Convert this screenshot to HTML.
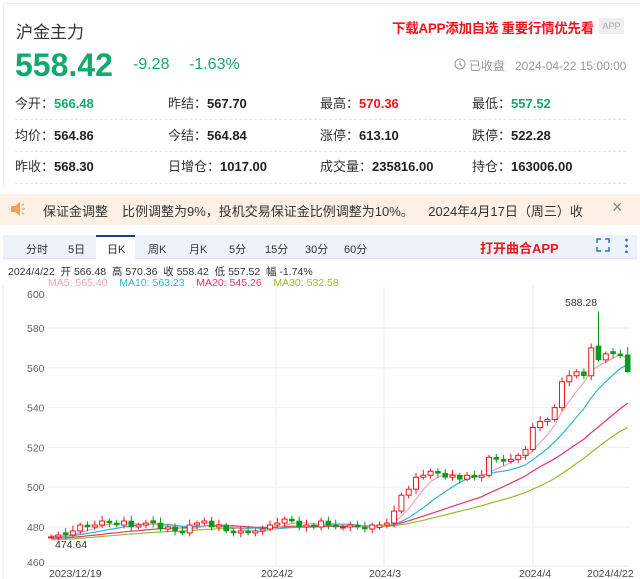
<!DOCTYPE html>
<html><head><meta charset="utf-8"><style>
*{margin:0;padding:0;box-sizing:border-box}
body{width:640px;height:579px;background:#fff;font-family:"Liberation Sans","Noto Sans CJK SC",sans-serif;position:relative;overflow:hidden;color:#333}
.a{position:absolute;white-space:nowrap}
.lbl{font-size:13px;color:#333;line-height:16px}
.lbl b{font-weight:bold;color:#222;font-size:13px}
.sep{position:absolute;left:15px;width:611px;border-top:1px dashed #e3e3e3}
.tab{position:absolute;top:241px;font-size:11px;color:#333}
</style></head><body>
<div class="a" style="left:3px;top:3px;width:637px;height:1px;background:#eee"></div>
<div class="a" style="left:3px;top:3px;width:1px;height:185px;background:#eee"></div>
<div class="a" style="left:16px;top:18px;font-size:17px;color:#333">沪金主力</div>
<div class="a" style="left:392px;top:17px;font-size:13.5px;font-weight:bold;color:#f0141e;letter-spacing:-0.3px">下载APP添加自选 重要行情优先看</div>
<div class="a" style="left:599px;top:18px;width:25px;height:16px;background:#eee;color:#aaa;font-size:9px;text-align:center;line-height:16px">APP</div>
<div class="a" style="left:15px;top:47px;font-size:32px;font-weight:bold;color:#15a86c;line-height:36px">558.42</div>
<div class="a" style="left:133px;top:56px;font-size:16px;color:#15a86c">-9.28</div>
<div class="a" style="left:189px;top:56px;font-size:16px;color:#15a86c">-1.63%</div>
<svg class="a" style="left:454px;top:58px" width="12" height="12"><circle cx="6" cy="6" r="5" fill="none" stroke="#999" stroke-width="1.1"/><path d="M6 3v3.3l2 1.5" fill="none" stroke="#999" stroke-width="1.1"/></svg>
<div class="a" style="left:469px;top:57px;font-size:12px;color:#999">已收盘&nbsp;&nbsp; 2024-04-22 15:00:00</div>
<div class="a lbl" style="left:15px;top:96px">今开：<b style="color:#15a86c">566.48</b></div>
<div class="a lbl" style="left:168px;top:96px">昨结：<b>567.70</b></div>
<div class="a lbl" style="left:320px;top:96px">最高：<b style="color:#f0141e">570.36</b></div>
<div class="a lbl" style="left:472px;top:96px">最低：<b style="color:#15a86c">557.52</b></div>
<div class="sep" style="top:119px"></div>
<div class="a lbl" style="left:15px;top:128px">均价：<b>564.86</b></div>
<div class="a lbl" style="left:168px;top:128px">今结：<b>564.84</b></div>
<div class="a lbl" style="left:320px;top:128px">涨停：<b>613.10</b></div>
<div class="a lbl" style="left:472px;top:128px">跌停：<b>522.28</b></div>
<div class="sep" style="top:151px"></div>
<div class="a lbl" style="left:15px;top:159px">昨收：<b>568.30</b></div>
<div class="a lbl" style="left:168px;top:159px">日增仓：<b>1017.00</b></div>
<div class="a lbl" style="left:320px;top:159px">成交量：<b>235816.00</b></div>
<div class="a lbl" style="left:472px;top:159px">持仓：<b>163006.00</b></div>
<div class="sep" style="top:183px"></div>
<div class="a" style="left:0;top:194px;width:640px;height:31px;background:#fdf0e6"></div>
<svg class="a" style="left:10px;top:201px" width="16" height="16"><path d="M1 5h4l5-4v14l-5-4H1z" fill="#f0a060"/><path d="M12 8h3M12 4l2-1M12 12l2 1" stroke="#f0a060" stroke-width="1.3"/></svg>
<div class="a" style="left:43px;top:201px;font-size:13px;color:#333">保证金调整</div>
<div class="a" style="left:122px;top:201px;font-size:13px;color:#333">比例调整为9%，投机交易保证金比例调整为10%。&nbsp;&nbsp;&nbsp; 2024年4月17日（周三）收</div>
<div class="a" style="left:612px;top:197px;font-size:18px;color:#888">×</div>
<div class="a" style="left:3px;top:235px;width:634px;height:24px;background:#eef3fb;border-bottom:1px solid #dde5f0"></div>
<div class="a" style="left:96px;top:235px;width:39px;height:25px;background:#fff;border-top:2px solid #1b3d8f"></div>
<div class="tab" style="left:26px">分时</div>
<div class="tab" style="left:68px">5日</div>
<div class="tab" style="left:107px">日K</div>
<div class="tab" style="left:148px">周K</div>
<div class="tab" style="left:189px">月K</div>
<div class="tab" style="left:229px">5分</div>
<div class="tab" style="left:265px">15分</div>
<div class="tab" style="left:305px">30分</div>
<div class="tab" style="left:344px">60分</div>
<div class="a" style="left:480px;top:238px;font-size:13px;font-weight:bold;color:#f0141e">打开曲合APP</div>
<svg class="a" style="left:596px;top:238px" width="14" height="14"><path d="M1 5V1h4M9 1h4v4M13 9v4H9M5 13H1V9" fill="none" stroke="#2b6fd6" stroke-width="1.5"/></svg>
<div class="a" style="left:625px;top:237px;width:3px;height:16px;background:radial-gradient(circle,#2b6fd6 1.3px,transparent 1.5px) 0 0/3px 6px"></div>
<div class="a" style="left:8px;top:264px;font-size:10.5px;color:#333">2024/4/22&nbsp; 开 566.48&nbsp; 高 570.36&nbsp; 收 558.42&nbsp; 低 557.52&nbsp; 幅 -1.74%</div>
<div class="a" style="left:48px;top:277px;font-size:10.5px"><span style="color:#f7a1b8">MA5: 565.40</span>&nbsp;&nbsp;&nbsp; <span style="color:#2cb7d8">MA10: 563.23</span>&nbsp;&nbsp;&nbsp; <span style="color:#e8336d">MA20: 545.26</span>&nbsp;&nbsp;&nbsp; <span style="color:#9bbb2b">MA30: 532.58</span></div>
<svg id="ch" class="a" style="left:0;top:286px" width="640" height="293"></svg>
<script>
var c=[475,476,476,478,481,480,481,483,482,
481,483,480,481,482,482,479,480,478,477,481,482,483,480,481,478,477,478,477,478,479,481,
482,484,483,480,481,480,483,481,480,480,481,480,479,481,481,
482,488,496,499,505,506,508,507,505,506,504,506,505,506,515,514,513,514,516,519,530,
533,534,540,553,556,558,556,570,564,567,567,566,558];
var pre=[];for(var i=0;i<30;i++)pre.push(470+i*0.15+((i*7)%5)*0.6);
var all=pre.concat(c);
function Y(p){return 42+(580-p)*1.99}
function X(i){return 51+i*7.3}
var s='';
[580,560,540,520,500,480].forEach(function(v){var y=Y(v);s+='<line x1="48" x2="630" y1="'+y+'" y2="'+y+'" stroke="#eee"/>';});
[[600,8],[580,Y(580)],[560,Y(560)],[540,Y(540)],[520,Y(520)],[500,Y(500)],[480,Y(480)],[460,276]].forEach(function(a){s+='<text x="27" y="'+(a[1]+4)+'" font-size="10.5" fill="#666" font-family="Liberation Sans">'+a[0]+'</text>';});
s+='<line x1="48" x2="630" y1="280" y2="280" stroke="#eee"/>';
[276,384,533].forEach(function(x){s+='<line x1="'+x+'" x2="'+x+'" y1="0" y2="281" stroke="#eee"/>';});
s+='<line x1="3" x2="3" y1="0" y2="293" stroke="#eee"/>';
var lab=[[49,'2023/12/19'],[261,'2024/2'],[369,'2024/3'],[519,'2024/4'],[587,'2024/4/22']];
lab.forEach(function(l){s+='<text x="'+l[0]+'" y="291" font-size="10.5" fill="#444" font-family="Liberation Sans">'+l[1]+'</text>';});
function ma(n,col){var pts=[];for(var i=0;i<c.length;i++){var k=i+30,sum=0;for(var j=0;j<n;j++)sum+=all[k-j];pts.push(X(i).toFixed(1)+','+Y(sum/n).toFixed(1));}s+='<polyline points="'+pts.join(' ')+'" fill="none" stroke="'+col+'" stroke-width="1.2"/>';}
ma(30,'#9bbb2b');ma(20,'#e8336d');ma(10,'#2cb7d8');ma(5,'#f7a1b8');
for(var i=0;i<c.length;i++){
 var o=i==0?474.5:all[i+29];
 if(Math.abs(o-c[i])<0.3)o=c[i]+((i%3)-1)*1.2;
 var h=Math.max(o,c[i])+1.2+(i%4)*0.5,l=Math.min(o,c[i])-1.2-(i%3)*0.5;
 if(i==75){o=571;h=588.28;l=563;}
 if(i==79){o=566.5;h=570.36;l=557.52;}
 if(i==0)l=474.64;
 var up=c[i]>=o,col=up?'#f0141e':'#0a9a1e',x=X(i);
 s+='<line x1="'+x+'" x2="'+x+'" y1="'+Y(h)+'" y2="'+Y(l)+'" stroke="'+col+'"/>';
 var t=Y(Math.max(o,c[i])),b=Y(Math.min(o,c[i]));if(b-t<1)b=t+1;
 s+='<rect x="'+(x-2.5)+'" y="'+t+'" width="5" height="'+(b-t)+'" fill="'+(up?'#fff':col)+'" stroke="'+col+'" stroke-width="'+(up?1:0.6)+'"/>';
}
s+='<text x="565" y="20" font-size="10.5" fill="#333" font-family="Liberation Sans">588.28</text>';
s+='<text x="55" y="262" font-size="10.5" fill="#333" font-family="Liberation Sans">474.64</text>';
document.getElementById('ch').innerHTML=s;
</script>
</body></html>
